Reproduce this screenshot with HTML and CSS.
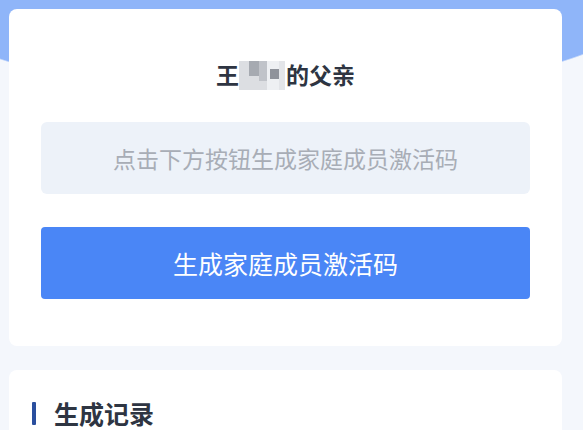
FILE: index.html
```html
<!DOCTYPE html>
<html>
<head>
    <title>家庭成员激活码</title>
    <meta name='viewport' content='width=device-width, initial-scale=1'/>
    <meta http-equiv="CONTENT-TYPE" content="text/html; charset=UTF-8">
    <link rel="stylesheet" href="styles.css">
</head>
<body>
    <div class="page">
        <!-- Generate card -->
        <div class="card card-generate">
            <div class="member-title">
                <span>王</span>
                <svg class="name-mosaic" viewBox="0 0 47 30" width="47" height="30">
                    <rect x="0" y="0" width="28" height="29" fill="#dcdee2"/>
                    <rect x="10" y="0" width="10" height="15" fill="#a6aab1"/>
                    <rect x="20" y="0" width="8" height="20" fill="#c0c3c9"/>
                    <rect x="28" y="0" width="12" height="29" fill="#eef0f3"/>
                    <rect x="31" y="8" width="9" height="10" fill="#8f939b"/>
                    <rect x="40" y="0" width="6" height="29" fill="#e3e5e9"/>
                </svg>
                <span>的父亲</span>
            </div>
            <div class="code-box">点击下方按钮生成家庭成员激活码</div>
            <button class="btn-generate">生成家庭成员激活码</button>
        </div>

        <!-- History card -->
        <div class="card card-history">
            <div class="section-title">生成记录</div>
        </div>
    </div>
</body>
</html>
```

FILE: styles.css
```css
/* Page */
body {
    margin: 0;
    padding: 0;
    font-family: "Noto Sans CJK SC", "Noto Sans", sans-serif;
    background:
        radial-gradient(380px 110px at 285px -13px, #8fb5f9 99%, rgba(143,181,249,0) 100%) no-repeat,
        #f4f7fc;
    min-height: 430px;
}

.page {
    padding: 9px 21px 0 9px;
}

.card {
    background: white;
    border-radius: 8px;
}

/* Generate card */
.card-generate {
    padding: 49px 32px 47px;
}

.member-title {
    display: flex;
    justify-content: center;
    align-items: center;
    height: 32px;
    font-size: 23px;
    font-weight: 700;
    color: #2e3542;
}

.name-mosaic {
    display: block;
    margin: 4px 0 0 0;
}

.code-box {
    margin-top: 32px;
    height: 72px;
    line-height: 72px;
    background: #edf2f9;
    border-radius: 6px;
    text-align: center;
    font-size: 23px;
    color: #a8adb6;
}

.btn-generate {
    display: block;
    width: 100%;
    height: 72px;
    margin-top: 33px;
    border: none;
    border-radius: 4px;
    background: #4a86f6;
    color: white;
    font-family: inherit;
    font-size: 25px;
    cursor: pointer;
}

/* History card */
.card-history {
    margin-top: 24px;
    padding: 27px 23px 20px;
}

.section-title {
    display: flex;
    align-items: center;
    gap: 18px;
    height: 32px;
    font-size: 25px;
    font-weight: 700;
    color: #2e3542;
}

.section-title:before {
    content: "";
    width: 4px;
    height: 23px;
    background: #2a4f9e;
    border-radius: 1px;
}
```
